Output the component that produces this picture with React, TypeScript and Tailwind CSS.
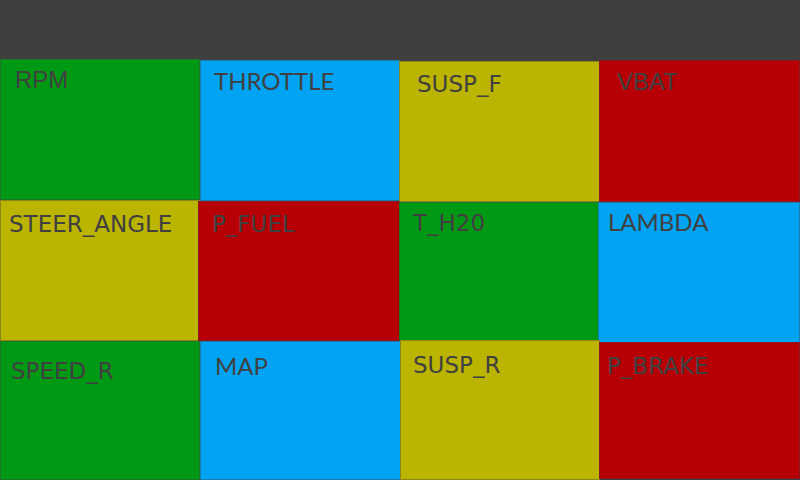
type Tile = {
  label: string
  box: string
  text: string
}

const GREEN = "bg-[#009914]"
const BLUE = "bg-[#00a4f2]"
const YELLOW = "bg-[#bbb400]"
const RED = "bg-[#b70006]"

const ARIAL = "font-['Liberation_Sans',Arial,sans-serif] text-[24px]"
const LATO = "font-['Lato',sans-serif] text-[24px]"
const DEJAVU = "font-['DejaVu_Sans',sans-serif] text-[23px]"

const tiles: Tile[] = [
  { label: "RPM", box: `${GREEN} w-[200px] h-[141px]`, text: `${ARIAL} pl-[14px] pt-[8px]` },
  { label: "THROTTLE", box: `${BLUE} mt-[1px] w-[200px] h-[141px]`, text: `${LATO} pl-[13px] pt-[8px]` },
  { label: "SUSP_F", box: `${YELLOW} -ml-[1px] mt-[2px] w-[201px] h-[141px]`, text: `${DEJAVU} pl-[17px] pt-[11px]` },
  { label: "VBAT", box: `${RED} -ml-[1px] mt-[1px] w-[201px] h-[142px]`, text: `${ARIAL} pl-[17px] pt-[9px]` },

  { label: "STEER_ANGLE", box: `${YELLOW} w-[200px] h-[141px]`, text: `${DEJAVU} pl-[8px] pt-[12px]` },
  { label: "P_FUEL", box: `${RED} -ml-[2px] mt-[1px] w-[202px] h-[140px]`, text: `${DEJAVU} pl-[13px] pt-[11px]` },
  { label: "T_H20", box: `${GREEN} -ml-[1px] mt-[2px] w-[201px] h-[139px]`, text: `${DEJAVU} pl-[13px] pt-[9px]` },
  { label: "LAMBDA", box: `${BLUE} -ml-[2px] mt-[2px] w-[202px] h-[141px]`, text: `${LATO} pl-[9px] pt-[7px]` },

  { label: "SPEED_R", box: `${GREEN} w-[200px] h-[139px]`, text: `${DEJAVU} pl-[10px] pt-[18px]` },
  { label: "MAP", box: `${BLUE} w-[201px] h-[139px]`, text: `${LATO} pl-[14px] pt-[12px]` },
  { label: "SUSP_R", box: `${YELLOW} -mt-[1px] w-[200px] h-[140px]`, text: `${DEJAVU} pl-[12px] pt-[13px]` },
  { label: "P_BRAKE", box: `${RED} -ml-[1px] mt-[1px] w-[201px] h-[137px]`, text: `${DEJAVU} pl-[7px] pt-[12px]` },
]

export default function App() {
  return (
    <div className="w-[800px] h-[480px] overflow-hidden bg-[#3f3f3f] flex flex-col">
      <div className="h-[59px] shrink-0 bg-[#3f3f3f]" />
      <div className="grid grid-cols-4 grid-rows-[141px_141px_139px]">
        {tiles.map(t => (
          <div key={t.label} className={`${t.box} border border-[#404040]/40 relative`}>
            <p className={`${t.text} leading-none text-[#404040] whitespace-nowrap`}>{t.label}</p>
          </div>
        ))}
      </div>
    </div>
  )
}
